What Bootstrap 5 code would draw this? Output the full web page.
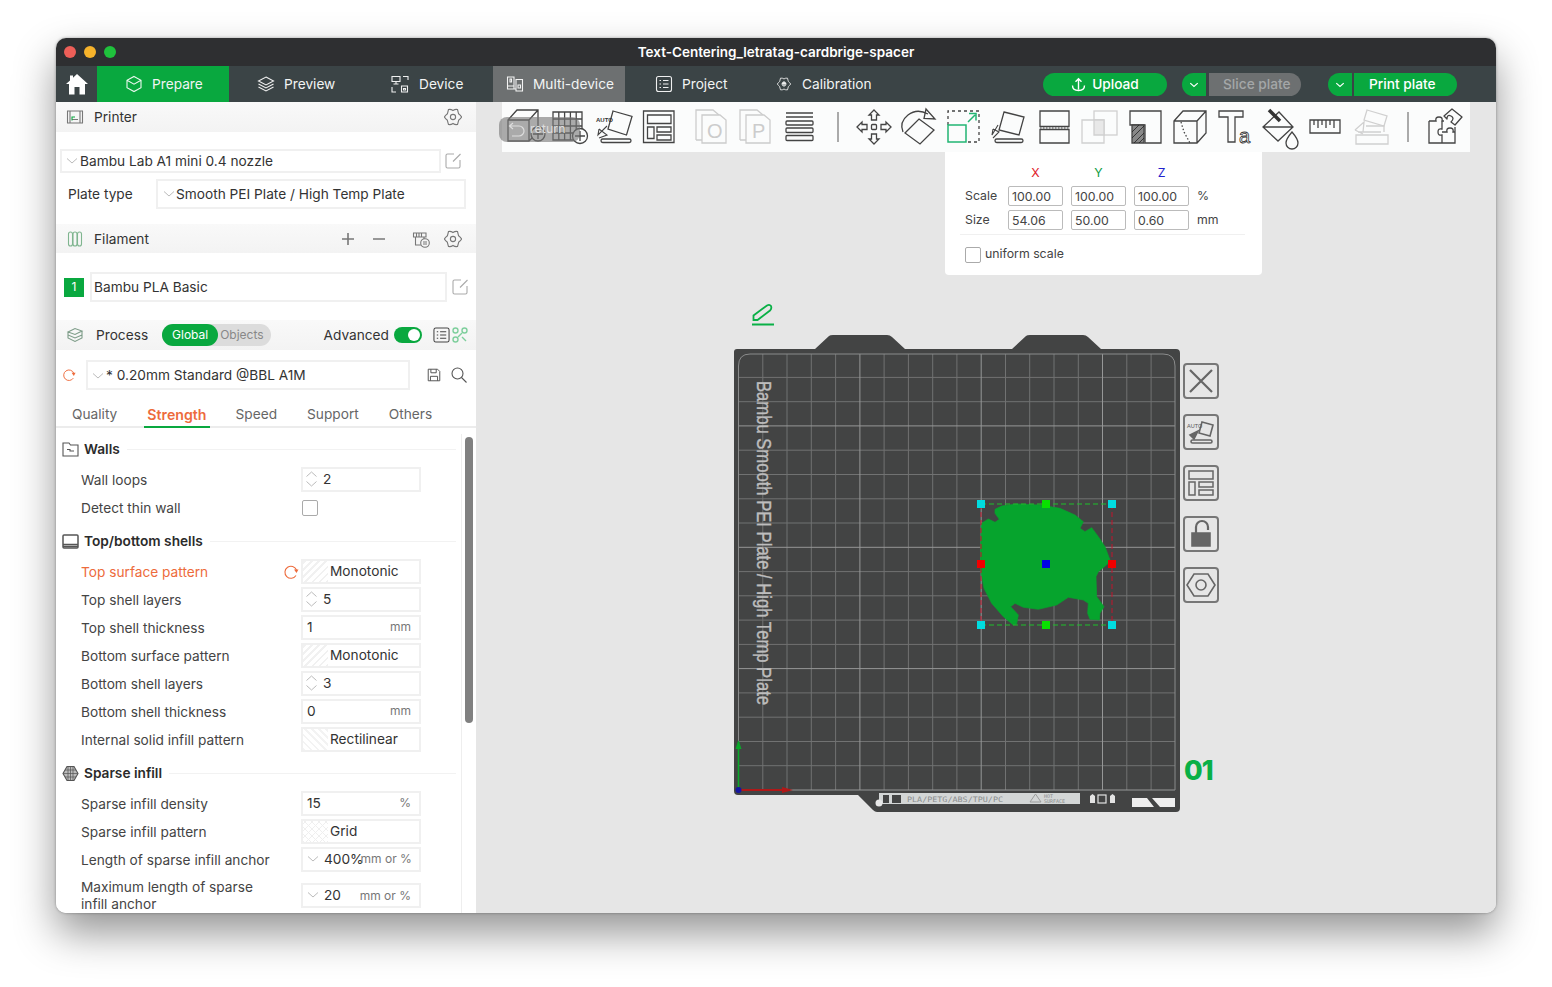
<!DOCTYPE html>
<html lang="en">
<head>
<meta charset="UTF-8">
<title>Bambu Studio</title>
<link href="https://cdn.jsdelivr.net/npm/bootstrap@5.3.0/dist/css/bootstrap.min.css" rel="stylesheet">
<style>
    html, body { height: 987px; overflow: hidden; background: #fff; }
    body { font-family: Inter, "Noto Sans", sans-serif; font-size: 13.7px; color: #333; }
    .app-window { width: 1440px; height: 875px; margin: 38px 0 0 56px; border-radius: 10px; overflow: hidden; box-shadow: 0 20px 42px rgba(0,0,0,.42), 0 0 3px rgba(0,0,0,.35); }
    .title-bar { height: 28px; background: #2e2f31; color: #fff; font-size: 13.5px; font-weight: 600; position: relative; }
    .traffic { width: 12px; height: 12px; border-radius: 50%; }
    .traffic-box { position: absolute; left: 8px; top: 8px; }
    .tab-bar { height: 36px; background: #3b4446; color: #f2f4f4; }
    .home-tab { width: 41px; }
    .tab-item { width: 132px; gap: 9px; padding-left: 28px; height: 36px; }
    .tab-item.is-prepare { background: #09a83f; }
    .tab-item.is-device { padding-left: 30px; gap: 10px; }
    .tab-item.is-grey { background: #6d7071; padding-left: 13px; }
    .tab-item.is-project { padding-left: 30px; }
    .tab-item.is-calib { padding-left: 20px; gap: 11px; }
    .tab-ico { width: 18px; height: 18px; fill: none; stroke: #fff; stroke-width: 1.1; opacity: .92; }
    .tab-item.is-calib .tab-ico { width: 14px; height: 14px; }
    .action-zone { position: absolute; left: 987px; top: 7px; height: 23px; }
    .green-pill { background: #09a83f; color: #fff; height: 23px; font-weight: 500; }
    .upload-pill { width: 124px; border-radius: 12px; gap: 6px; margin-right: 15px; }
    .drop-left { width: 24px; border-radius: 12px 0 0 12px; margin-right: 3px; }
    .slice-pill { width: 92px; border-radius: 0 12px 12px 0; background: #6d7071; color: #a4a7a8; margin-right: 27px; padding-left: 14px; }
    .print-pill { width: 103px; border-radius: 0 12px 12px 0; padding-left: 15px; margin-left: -1px; }
    .work-area { height: 811px; }
    .side-panel { width: 420px; background: #fff; flex: none; }
    .panel-head { height: 30px; background: linear-gradient(#f9f9f9, #f3f3f3); padding-left: 10px; padding-right: 14px; }
    .head-label { margin-left: 10px; }
    .head-ico { width: 18px; height: 18px; fill: none; stroke: #777; stroke-width: 1.1; flex: none; }
    .fld { border: 2px solid #f0f0f0; background: #fff; color: #333; }
    .chev { width: 12px; height: 8px; fill: none; stroke: #bbb; stroke-width: 1; flex: none; }
    .printer-field { margin: 17px 0 0 4px; height: 24px; }
    .printer-select { width: 381px; height: 24px; padding-left: 4px; gap: 2px; }
    .plate-row { margin: 6px 0 0 12px; height: 30px; }
    .plate-label { width: 88px; }
    .plate-select { width: 310px; height: 30px; padding-left: 5px; gap: 1px; }
    .filament-head { height: 29px; margin-top: 15px; padding-top: 1px; }
    .filament-row { margin: 19px 0 0 8px; height: 30px; }
    .swatch { width: 20px; height: 19px; background: #09a83f; color: #fff; font-size: 12px; }
    .filament-input { width: 357px; height: 30px; margin-left: 6px; padding: 1px 0 0 2px; }
    .process-head { margin-top: 18px; padding-right: 8px; }
    .seg-wrap { width: 109px; height: 22px; background: #dcdcdc; border-radius: 11px; margin-left: 14px; font-size: 12px; color: #888; }
    .seg-on { width: 56px; height: 22px; border-radius: 11px; background: #09a83f; color: #fff; margin-right: 2px; }
    .adv-toggle { width: 28px; height: 16px; background: #09a83f; border-radius: 8px; position: relative; margin: 0 11px 0 5px; }
    .adv-toggle::after { content: ""; position: absolute; right: 2px; top: 2px; width: 12px; height: 12px; background: #fff; border-radius: 50%; }
    .preset-row { margin: 10px 0 0 6px; height: 30px; }
    .preset-select { width: 324px; height: 30px; margin-left: 10px; padding: 1px 0 0 4px; gap: 2px; }
    .tabs-row { height: 28px; margin-top: 10px; border-bottom: 2px solid #ececec; color: #666; padding-left: 16px; }
    .tab-text { margin-right: 30px; height: 27px; padding-top: 4px; }
    .tab-text.is-on { color: #ed6b3c; font-weight: 600; font-size: 14.2px; border-bottom: 2px solid #09a83f; padding: 4px 3px 0; margin: 0 26px 0 -3px; height: 28px; }
    .opt-scroll { height: 485px; overflow: hidden; position: relative; padding-top: 2px; }
    .opt-rail { position: absolute; left: 405px; top: 6px; bottom: 0; border-left: 1px solid #eee; }
    .opt-thumb { position: absolute; left: 409px; top: 9px; width: 8px; height: 286px; background: #808080; border-radius: 4px; }
    .opt-title { height: 28px; font-weight: 600; margin: 5px 0 3px 6px; color: #2b2b2b; width: 394px; }
    .opt-rule { flex: 1; border-top: 1px solid #f2f2f2; margin-left: 7px; }
    .opt-ico { width: 17px; height: 17px; margin-right: 5px; flex: none; fill: none; stroke: #555; stroke-width: 1.1; }
    .opt-row { height: 28px; padding-left: 25px; width: 365px; }
    .opt-row.is-tall { height: 36px; margin-top: 4px; line-height: 17px; }
    .opt-label { width: 220px; color: #444; }
    .opt-label.is-mod { color: #ed6b3c; }
    .opt-reset { width: 16px; height: 16px; margin-left: -18px; margin-right: 2px; flex: none; }
    .opt-field { width: 120px; height: 25px; margin-top: -2px; }
    .spin-box { width: 13px; margin: 0 5px 0 2px; flex: none; }
    .spin-box svg { display: block; width: 13px; height: 8px; fill: none; stroke: #bbb; stroke-width: 1; }
    .spin-box svg + svg { margin-top: 2px; }
    .hatch { width: 25px; height: 21px; margin-right: 2px; background: repeating-linear-gradient(45deg, #f3f3f3 0 2px, #fff 2px 5px); flex: none; }
    .hatch.is-mono { background: repeating-linear-gradient(-45deg, #f1f1f1 0 2px, #fff 2px 5px); }
    .hatch.is-cross { background: repeating-linear-gradient(45deg, #efefef 0 1px, transparent 1px 5px), repeating-linear-gradient(-45deg, #efefef 0 1px, #fff 1px 5px); }
    .unit { margin-left: auto; padding-right: 8px; font-size: 12px; color: #777; white-space: nowrap; }
    .unit.is-tight { margin-left: -3px; padding: 0; }
    .check-box { width: 16px; height: 16px; border: 1px solid #aaa; border-radius: 2px; background: #fff; flex: none; }
    .opt-row .check-box { margin: -1px 0 0 1px; }
    .canvas-area { background: #e6e6e6; position: relative; flex: 1; }
    .tool-strip { margin-left: 26px; width: 968px; height: 50px; background: #fbfcfc; position: relative; }
    .tool-cell { width: 45px; height: 50px; flex: none; display: block; fill: none; stroke: #444; stroke-width: 1.3; }
    .tool-sep { height: 30px; border-left: 2px solid #aaa; flex: none; }
    .return-pill { position: absolute; left: -3px; top: 15px; width: 81px; height: 25px; background: rgba(120,120,120,.62); border-radius: 8px; color: #ddd; font-size: 12.5px; padding-left: 31px; }
    .return-pill svg { position: absolute; left: 9px; top: 4px; width: 18px; height: 17px; fill: none; stroke: #ddd; stroke-width: 1.2; }
    .gizmo-panel { position: absolute; left: 469px; top: 50px; width: 317px; height: 123px; background: #fff; border-radius: 0 0 4px 4px; font-size: 12.3px; color: #444; padding: 12px 8px 0 20px; }
    .gizmo-grid { display: grid; grid-template-columns: 35px 55px 55px 55px auto; column-gap: 8px; row-gap: 4px; align-items: center; }
    .gizmo-input { border: 1px solid #bbb; border-radius: 2px; height: 20px; line-height: 19px; padding-left: 3px; }
    .gizmo-rule { border-top: 1px solid #f0f0f0; margin: 4px 0 10px -5px; width: 285px; }
    .plate-svg { position: absolute; left: 0; top: 0; width: 1020px; height: 811px; }
    .side-btns { position: absolute; left: 707px; top: 261px; gap: 15px; }
    .side-btn { width: 36px; height: 36px; border: 2px solid #777; border-radius: 4px; display: block; fill: none; stroke: #666; stroke-width: 1.6; }
</style>
</head>
<body>
<svg width="0" height="0" class="position-absolute">
    <symbol id="gear" viewBox="0 0 18 18"><path d="M9 2.500Q11.200 1 13.500 1.500 14.200 4.400 14.600 5.800 16.200 7 17.600 9 16.200 11 14.600 12.300 14.200 14 13.500 16.500 11.200 17 9 15.500 6.800 17 4.500 16.500 3.800 14 3.400 12.300 1.800 11 .4 9 1.800 7 3.400 5.800 3.800 4.400 4.500 1.500 6.800 1 9 2.500Z"/><circle cx="9" cy="9" r="2.600"/></symbol>
    <symbol id="edit" viewBox="0 0 18 18"><path d="M10 2H3.500A1.500 1.500 0 0 0 2 3.500V14.500A1.500 1.500 0 0 0 3.500 16H14.500A1.500 1.500 0 0 0 16 14.500V8M9 9.500L16.500 2"/></symbol>
    <symbol id="redo" viewBox="0 0 16 16"><path d="M13.500 6A6 6 0 1 0 13 11.500" fill="none" stroke="#ed6b3c" stroke-width="1.100"/><path d="M11 5.500H15.500L13.500 9Z" fill="#ed6b3c"/></symbol>
    <symbol id="chevd" viewBox="0 0 12 8"><path d="M1 1.500L6 6 11 1.500"/></symbol>
</svg>

<div class="app-window d-flex flex-column">
    <!-- title bar -->
    <div class="title-bar d-flex align-items-center justify-content-center">
        <div class="traffic-box d-flex gap-2">
            <span class="traffic" style="background:#ee5f58"></span>
            <span class="traffic" style="background:#f7b32b"></span>
            <span class="traffic" style="background:#1fc23c"></span>
        </div>
        Text-Centering_letratag-cardbrige-spacer
    </div>

    <!-- main tabs -->
    <div class="tab-bar d-flex position-relative">
        <div class="home-tab d-flex align-items-center justify-content-center">
            <svg width="22" height="22" viewBox="0 0 22 22"><path d="M11 1L22 11H19V21.500H13.500V14H8.500V21.500H3V11H0L4 7.400V2.500H7V4.700Z" fill="#fff"/></svg>
        </div>
        <div class="tab-item is-prepare d-flex align-items-center">
            <svg class="tab-ico" viewBox="0 0 18 18"><path d="M9 1.500L16 5.300V12.700L9 16.500 2 12.700V5.300ZM2 5.300L9 9.200 16 5.300"/></svg><span>Prepare</span>
        </div>
        <div class="tab-item d-flex align-items-center">
            <svg class="tab-ico" viewBox="0 0 18 18"><path d="M9 2L16.500 6 9 10 1.500 6ZM1.500 9L9 13 16.500 9M1.500 12L9 16 16.500 12"/></svg><span>Preview</span>
        </div>
        <div class="tab-item is-device d-flex align-items-center">
            <svg class="tab-ico" viewBox="0 0 18 18"><path d="M1 1.500H9V6.500H1ZM5 6.500V9M2.500 9H7.500M12 1.500H17V5M1 12V17H5M10.500 11H16.500V17H10.500ZM12.500 13.500H14.500V15H12.500Z"/></svg><span>Device</span>
        </div>
        <div class="tab-item is-grey d-flex align-items-center">
            <svg class="tab-ico" viewBox="0 0 18 18"><path d="M1.500 2H8V14H1.500ZM4 4H5.500V7H4ZM8 14H10M10 4.500H16.500V16H10ZM12 10H14.500V13H12ZM1.500 11H8"/></svg><span>Multi-device</span>
        </div>
        <div class="tab-item is-project d-flex align-items-center">
            <svg class="tab-ico" viewBox="0 0 18 18"><rect x="1.500" y="1.500" width="15" height="15" rx="2"/><path d="M4.500 5.500H6M8 5.500H13.500M4.500 9H6M8 9H13.500M4.500 12.500H6M8 12.500H13.500"/></svg><span>Project</span>
        </div>
        <div class="tab-item is-calib d-flex align-items-center">
            <svg class="tab-ico" viewBox="0 0 18 18"><use href="#gear"/><path d="M9 6L11.500 9H6.500ZM9 9V12" fill="#fff" stroke="#fff"/></svg><span>Calibration</span>
        </div>
        <div class="action-zone d-flex">
            <div class="green-pill upload-pill d-flex align-items-center justify-content-center">
                <svg width="15" height="15" viewBox="0 0 15 15" fill="none" stroke="#fff" stroke-width="1.400"><path d="M7.500 12.500V2M4.500 4.800L7.500 1.800 10.500 4.800M1.500 8.500C1.500 12 4 13.500 7.500 13.500S13.500 12 13.500 8.500"/></svg>Upload
            </div>
            <div class="green-pill drop-left d-flex align-items-center justify-content-center"><svg width="10" height="6" viewBox="0 0 12 8" fill="none" stroke="#fff" stroke-width="1.600"><use href="#chevd"/></svg></div>
            <div class="green-pill slice-pill d-flex align-items-center">Slice plate</div>
            <div class="green-pill drop-left d-flex align-items-center justify-content-center"><svg width="10" height="6" viewBox="0 0 12 8" fill="none" stroke="#fff" stroke-width="1.600"><use href="#chevd"/></svg></div>
            <div class="green-pill print-pill d-flex align-items-center">Print plate</div>
        </div>
    </div>

    <div class="work-area d-flex">
        <!-- left settings panel -->
        <div class="side-panel">
            <div class="panel-head d-flex align-items-center">
                <svg class="head-ico ms-0" viewBox="0 0 18 18"><path d="M1.500 3H16.500V15H1.500ZM4 3V15M14 3V15M6 11.500H12"/><path d="M6 12.500V9H9" stroke="#09a83f"/></svg>
                <span class="head-label">Printer</span>
                <svg class="head-ico ms-auto"><use href="#gear"/></svg>
            </div>
            <div class="printer-field d-flex align-items-center">
                <div class="fld printer-select d-flex align-items-center"><svg class="chev"><use href="#chevd"/></svg>Bambu Lab A1 mini 0.4 nozzle</div>
                <svg class="head-ico" style="stroke:#aaa;margin-left:3px"><use href="#edit"/></svg>
            </div>
            <div class="plate-row d-flex align-items-center">
                <span class="plate-label">Plate type</span>
                <div class="fld plate-select d-flex align-items-center"><svg class="chev"><use href="#chevd"/></svg>Smooth PEI Plate / High Temp Plate</div>
            </div>
            <div class="panel-head filament-head d-flex align-items-center">
                <svg class="head-ico" viewBox="0 0 18 18" style="stroke:#7fb58f"><rect x="2.500" y="2" width="4" height="14" rx="2"/><rect x="7" y="2" width="4" height="14" rx="2"/><rect x="11.500" y="2" width="4" height="14" rx="2"/></svg>
                <span class="head-label">Filament</span>
                <svg class="head-ico ms-auto" viewBox="0 0 18 18" style="stroke-width:1.600"><path d="M9 3V15M3 9H15"/></svg>
                <svg class="head-ico" style="margin-left:13px;stroke-width:1.600" viewBox="0 0 18 18"><path d="M3 9H15"/></svg>
                <svg class="head-ico" style="margin-left:24px" viewBox="0 0 18 18"><path d="M1.500 3H14V7H1.500ZM3.500 7V15H9M12 7V9M4.500 3V7M7 3V7M9.500 3V7"/><circle cx="13" cy="13" r="4.300"/><path d="M11 12H15M11 14H15"/></svg>
                <svg class="head-ico" style="margin-left:14px"><use href="#gear"/></svg>
            </div>
            <div class="filament-row d-flex align-items-center">
                <div class="swatch d-flex align-items-center justify-content-center">1</div>
                <div class="fld filament-input d-flex align-items-center">Bambu PLA Basic</div>
                <svg class="head-ico ms-1" style="stroke:#aaa"><use href="#edit"/></svg>
            </div>
            <div class="panel-head process-head d-flex align-items-center">
                <svg class="head-ico" viewBox="0 0 18 18"><path d="M2 6L9 2.500 16 5 9 8.500ZM2 6V9L9 12 16 9M2 9V12L9 15.500 16 12V5" stroke="#7d9c88"/></svg>
                <span class="head-label" style="margin-left:12px">Process</span>
                <div class="seg-wrap d-flex align-items-center"><span class="seg-on d-flex align-items-center justify-content-center">Global</span>Objects</div>
                <span class="ms-auto">Advanced</span>
                <span class="adv-toggle"></span>
                <svg class="head-ico" viewBox="0 0 18 18" style="stroke:#444;width:17px"><rect x="1" y="1.500" width="16" height="15" rx="2"/><path d="M4 5.500H5.500M7.500 5.500H14M4 9H5.500M7.500 9H14M4 12.500H5.500M7.500 12.500H14"/></svg>
                <svg class="head-ico" viewBox="0 0 18 18" style="margin:0 -1px 0 1px;stroke:#7fcf9d;stroke-width:1.400"><circle cx="4.500" cy="4.500" r="2.500"/><circle cx="13.500" cy="4.500" r="2.500"/><circle cx="4.500" cy="13.500" r="2.500"/><path d="M7 11L11 7M11 11L15 15"/></svg>
            </div>
            <div class="preset-row d-flex align-items-center">
                <svg width="14" height="14"><use href="#redo"/></svg>
                <div class="fld preset-select d-flex align-items-center"><svg class="chev"><use href="#chevd"/></svg>* 0.20mm Standard @BBL A1M</div>
                <svg class="head-ico" style="margin-left:16px;width:16px;stroke:#555" viewBox="0 0 18 18"><path d="M2.500 2.500H13L15.500 5V15.500H2.500ZM5.500 2.500V6.500H11.500V2.500M5 15.500V10.500H13V15.500"/></svg>
                <svg class="head-ico" style="margin-left:8px;stroke:#555" viewBox="0 0 18 18"><circle cx="7.500" cy="7.500" r="5.500"/><path d="M11.500 11.500L16.500 16.500"/></svg>
            </div>
            <div class="tabs-row d-flex">
                <span class="tab-text">Quality</span>
                <span class="tab-text is-on">Strength</span>
                <span class="tab-text">Speed</span>
                <span class="tab-text">Support</span>
                <span class="tab-text">Others</span>
            </div>

            <div class="opt-scroll">
                <div class="opt-rail"></div>
                <div class="opt-thumb"></div>

                <div class="opt-title d-flex align-items-center">
                    <svg class="opt-ico" viewBox="0 0 17 17"><path d="M1 2H7L8.500 4H16V15H1ZM5 8.500H8V10H12"/></svg>Walls<span class="opt-rule"></span>
                </div>
                <div class="opt-row d-flex align-items-center"><span class="opt-label">Wall loops</span><div class="fld opt-field d-flex align-items-center"><div class="spin-box"><svg viewBox="0 0 12 8"><path d="M1 6.500L6 2 11 6.500"/></svg><svg viewBox="0 0 12 8"><use href="#chevd"/></svg></div>2</div></div>
                <div class="opt-row d-flex align-items-center"><span class="opt-label">Detect thin wall</span><div class="check-box"></div></div>

                <div class="opt-title d-flex align-items-center">
                    <svg class="opt-ico" viewBox="0 0 17 17" style="stroke-width:1.500"><rect x="1" y="2" width="15" height="13" rx="1"/><path d="M1 11.500H16M1 13.500H16"/></svg>Top/bottom shells<span class="opt-rule"></span>
                </div>
                <div class="opt-row d-flex align-items-center"><span class="opt-label is-mod">Top surface pattern</span><svg class="opt-reset"><use href="#redo"/></svg><div class="fld opt-field d-flex align-items-center"><span class="hatch is-mono"></span>Monotonic</div></div>
                <div class="opt-row d-flex align-items-center"><span class="opt-label">Top shell layers</span><div class="fld opt-field d-flex align-items-center"><div class="spin-box"><svg viewBox="0 0 12 8"><path d="M1 6.500L6 2 11 6.500"/></svg><svg viewBox="0 0 12 8"><use href="#chevd"/></svg></div>5</div></div>
                <div class="opt-row d-flex align-items-center"><span class="opt-label">Top shell thickness</span><div class="fld opt-field d-flex align-items-center ps-1"><span>1</span><span class="unit">mm</span></div></div>
                <div class="opt-row d-flex align-items-center"><span class="opt-label">Bottom surface pattern</span><div class="fld opt-field d-flex align-items-center"><span class="hatch is-mono"></span>Monotonic</div></div>
                <div class="opt-row d-flex align-items-center"><span class="opt-label">Bottom shell layers</span><div class="fld opt-field d-flex align-items-center"><div class="spin-box"><svg viewBox="0 0 12 8"><path d="M1 6.500L6 2 11 6.500"/></svg><svg viewBox="0 0 12 8"><use href="#chevd"/></svg></div>3</div></div>
                <div class="opt-row d-flex align-items-center"><span class="opt-label">Bottom shell thickness</span><div class="fld opt-field d-flex align-items-center ps-1"><span>0</span><span class="unit">mm</span></div></div>
                <div class="opt-row d-flex align-items-center"><span class="opt-label">Internal solid infill pattern</span><div class="fld opt-field d-flex align-items-center"><span class="hatch"></span>Rectilinear</div></div>

                <div class="opt-title d-flex align-items-center">
                    <svg class="opt-ico" viewBox="0 0 17 17" style="fill:#bbb"><path d="M5 1.500H12L16 8.500 12 15.500H5L1 8.500Z"/><path d="M1 8.500H16M3 5H14M3 12H14M6 1.500V15.500M8.500 1.500V15.500M11 1.500V15.500" stroke-width=".7"/></svg>Sparse infill<span class="opt-rule"></span>
                </div>
                <div class="opt-row d-flex align-items-center"><span class="opt-label">Sparse infill density</span><div class="fld opt-field d-flex align-items-center ps-1"><span>15</span><span class="unit">%</span></div></div>
                <div class="opt-row d-flex align-items-center"><span class="opt-label">Sparse infill pattern</span><div class="fld opt-field d-flex align-items-center"><span class="hatch is-cross"></span>Grid</div></div>
                <div class="opt-row d-flex align-items-center"><span class="opt-label">Length of sparse infill anchor</span><div class="fld opt-field d-flex align-items-center ps-1"><svg class="chev" style="margin-right:5px"><use href="#chevd"/></svg>400%<span class="unit is-tight">mm or %</span></div></div>
                <div class="opt-row is-tall d-flex align-items-center"><span class="opt-label">Maximum length of sparse<br>infill anchor</span><div class="fld opt-field d-flex align-items-center ps-1"><svg class="chev" style="margin-right:5px"><use href="#chevd"/></svg>20<span class="unit">mm or %</span></div></div>
            </div>
        </div>

        <!-- 3D view -->
        <div class="canvas-area">
            <svg class="plate-svg" viewBox="476 102 1020 811">
                <path d="M737 349H815L829 336Q830 335 833 335H887Q890 335 892 337L905 349H1012L1026 336Q1027 335 1030 335H1083Q1086 335 1088 337L1101 349H1176Q1180 349 1180 353V808Q1180 812 1176 812H877Q875 812 873 810L858 795H738Q734 795 734 791V352Q734 349 737 349Z" fill="#434444"/>
                <path id="gridMinor" fill="none" stroke="#717272" stroke-width="1"/>
                <path id="gridMajor" fill="none" stroke="#969797" stroke-width="1"/>
                <path d="M738.500 790V366Q738.500 354 750 354H1163Q1175 354 1175 366V790" fill="none" stroke="#8a8b8b" stroke-width="1"/>
                <text transform="translate(757 381) rotate(90)" font-family="'Liberation Sans', sans-serif" font-size="21" fill="#bdbdbd" stroke="#bdbdbd" stroke-width=".4" textLength="324" lengthAdjust="spacingAndGlyphs">Bambu Smooth PEI Plate / High Temp Plate</text>

                <!-- label strip at the front edge -->
                <rect x="879" y="793" width="201" height="11" fill="#d3d6d6"/>
                <circle cx="879" cy="803" r="3.500" fill="#e8e8e8"/>
                <path d="M883 795H889V803H883ZM892 795H901V803H892Z" fill="#434444"/>
                <text x="907" y="802" font-family="'DejaVu Sans Mono', monospace" font-size="7.500" fill="#8a8d8d" textLength="96" lengthAdjust="spacingAndGlyphs">PLA/PETG/ABS/TPU/PC</text>
                <path d="M1030 802H1041L1035.500 794Z" fill="none" stroke="#9a9c9c"/>
                <text x="1044" y="798" font-family="'DejaVu Sans Mono', monospace" font-size="5" fill="#8a8d8d">HOT</text>
                <text x="1044" y="803" font-family="'DejaVu Sans Mono', monospace" font-size="5" fill="#8a8d8d">SURFACE</text>
                <path d="M1090 796L1092.500 794 1095 796V803H1090ZM1110 796L1112.500 794 1115 796V803H1110Z" fill="#e3e3e3"/>
                <rect x="1098" y="795" width="8" height="8" fill="none" stroke="#e3e3e3" stroke-width="1.200"/>
                <path d="M1132 798H1147L1154 807H1132ZM1152 798H1175V807H1160Z" fill="#eee"/>

                <!-- axes -->
                <path d="M738.500 790V742" stroke="#0aa82a" stroke-width="1.600"/>
                <path d="M735.500 749L738.500 740 741.500 749Z" fill="#0aa82a"/>
                <path d="M738.500 790H790" stroke="#b01818" stroke-width="2"/>
                <path d="M782 787L793 790 782 793Z" fill="#b01818"/>
                <circle cx="738.500" cy="790" r="3" fill="#1616a0"/>

                <!-- model -->
                <g transform="translate(960 350) scale(.3333)">
                    <path d="M105 478L125 468 170 462 240 465 300 475 345 495 370 515 360 535 375 545 395 533 415 560 435 590 450 630 445 640 415 665 408 680 410 740 432 770 420 790 418 810 390 808 383 790 385 760 370 750 325 742 290 765 235 778 190 772 165 760 152 770 175 795 170 822 160 825 130 800 95 760 72 715 62 660 62 590 65 520 85 507 105 517 118 508 105 490Z" fill="#06a42d" stroke="#06a42d" stroke-width="2" stroke-linejoin="round"/>
                </g>
                <path d="M981 504H1112M981 625H1112" stroke="#1fc02b" stroke-dasharray="5 3"/>
                <path d="M981 504V625M1112 504V625" stroke="#c2152c" stroke-dasharray="5 3"/>
                <g id="handles"></g>

                <!-- "01" plate number and pencil -->
                <text x="1184" y="780" font-family="Inter, sans-serif" font-weight="800" font-size="27" fill="#09b046" letter-spacing="-1">01</text>
                <path d="M753.500 320V315.500L767 305.500Q769.500 304 771 306 772 308.500 770 310.500L757.500 320Z" fill="none" stroke="#09b046" stroke-width="1.800"/>
                <path d="M752 324.500H774" stroke="#09b046" stroke-width="2"/>
            </svg>

            <!-- top toolbar -->
            <div class="tool-strip d-flex align-items-center">
                <svg class="tool-cell" viewBox="0 0 45 50"><path d="M6 18L15 8H36V30L27 39H6ZM6 18H27V39M27 18L36 8"/><circle cx="36" cy="32" r="7" fill="#fbfcfc"/><path d="M36 27V37M31 32H41"/></svg>
                <svg class="tool-cell" viewBox="0 0 45 50"><path d="M6 10H35V38H6ZM6 17H35M6 24H35M6 31H35M11.800 10V38M17.600 10V38M23.400 10V38M29.200 10V38"/><circle cx="33" cy="34" r="7.500" fill="#fbfcfc"/><path d="M33 29V39M28 34H38"/></svg>
                <svg class="tool-cell" viewBox="0 0 45 50"><path d="M21 9L40 14.500 34.500 33 16 27Z"/><path d="M15 24L6 33 7 27M7 36L15 33 7 27" stroke-width="1.100"/><rect x="9" y="37" width="30" height="3.500" rx="1.700"/><text x="4" y="20" font-size="6" font-family="'Liberation Sans', sans-serif" font-weight="700" fill="#333" stroke="none">AUTO</text></svg>
                <svg class="tool-cell" viewBox="0 0 45 50"><path d="M6.500 9H37V40.500H6.500ZM10.500 13H34V21.500H10.500ZM10.500 25V36.500H17V25ZM20 25H34V30H20ZM20 33H34V38H20Z"/></svg>
                <span style="width:8px" class="flex-none"></span>
                <svg class="tool-cell" viewBox="0 0 45 50" style="stroke:#ccc"><path d="M6 38V8H23L29 13M6 38H12"/><path d="M12 13H30L36 18V41H12Z" fill="#fbfcfc"/><text x="17" y="36" font-size="20" font-family="'Liberation Sans', sans-serif" fill="#ccc" stroke="none">O</text></svg>
                <svg class="tool-cell" viewBox="0 0 45 50" style="stroke:#ccc"><path d="M5 38V8H22L28 13M5 38H11"/><path d="M11 13H29L35 18V41H11Z" fill="#fbfcfc"/><text x="17" y="36" font-size="20" font-family="'Liberation Sans', sans-serif" fill="#ccc" stroke="none">P</text></svg>
                <svg class="tool-cell" viewBox="0 0 45 50"><path d="M6 11H33M6 15H33"/><rect x="6" y="19" width="27" height="4" rx="1"/><rect x="6" y="26" width="27" height="4.500" rx="1"/><rect x="6" y="33.500" width="27" height="5" rx="1"/></svg>
                <span class="d-flex justify-content-center flex-none" style="width:26px"><span class="tool-sep"></span></span>
                <svg class="tool-cell" viewBox="0 0 45 50"><rect x="20.500" y="22.500" width="5" height="5" rx="1"/><path d="M23 8L28 13H25.500V18H20.500V13H18ZM23 42L28 37H25.500V32H20.500V37H18ZM6 25L11 20V22.500H16V27.500H11V30ZM40 25L35 20V22.500H30V27.500H35V30Z"/></svg>
                <svg class="tool-cell" viewBox="0 0 45 50"><path d="M23 17L38 28 24 42 9 31Z"/><path d="M7 30Q3 20 12 13T32 12"/><path d="M30 7L39 17 28 16.500Z"/></svg>
                <svg class="tool-cell" viewBox="0 0 45 50"><path d="M7 23V9H38V40H25" stroke-dasharray="3 3"/><path d="M7 23H25V40H7Z" stroke="#22b573" stroke-width="1.500"/><path d="M27 20L34 13M28 11.500H35V18.500" stroke="#22b573" stroke-width="1.500"/></svg>
                <svg class="tool-cell" viewBox="0 0 45 50"><path d="M18 10L38 15 33 33 13 28Z"/><path d="M12 23L6 33 7 27M7 36L13 30 7 27" stroke-width="1.100"/><rect x="9" y="37" width="28" height="3.500" rx="1.700"/></svg>
                <svg class="tool-cell" viewBox="0 0 45 50"><path d="M9 9H38V24.500H9ZM9 27.500H38V41H9Z"/><path d="M9 26H38" stroke-dasharray="1.500 1.500" stroke-width="1"/></svg>
                <svg class="tool-cell" viewBox="0 0 45 50" style="stroke:#d0d0d0"><rect x="18" y="9" width="23" height="24"/><path d="M6 18H28V41H6Z" fill="#fbfcfc"/><path d="M18 18H28V33H18Z" fill="#e8e8e8"/></svg>
                <svg class="tool-cell" viewBox="0 0 45 50"><path d="M9 9H40V41H24V23H9Z"/><path d="M11 23H23V41H11Z" fill="#888"/><path d="M11 30L18 23M11 36L23 24M13 41L23 31M18 41L23 36" stroke="#222" stroke-width=".8"/></svg>
                <svg class="tool-cell" viewBox="0 0 45 50"><path d="M8 19L17 9H40V31L31 41H8ZM8 19H31V41M31 19L40 9"/><path d="M15 20L18 30 24 41" stroke-dasharray="1.500 2"/></svg>
                <svg class="tool-cell" viewBox="0 0 45 50"><path d="M8 9H32V15H24V40H17V15H8Z"/><text x="28" y="41" font-size="20" font-family="'Liberation Sans', sans-serif" fill="#fbfcfc" stroke="#333" stroke-width=".8">a</text></svg>
                <svg class="tool-cell" viewBox="0 0 45 50"><path d="M7 25L23 10 37 25 22 39ZM7 25H37"/><path d="M13 8L24 19" stroke-width="3.500" stroke="#333"/><path d="M36 30Q30 37 30 41A6 6 0 0 0 42 41Q42 37 36 30Z" fill="#fbfcfc"/></svg>
                <svg class="tool-cell" viewBox="0 0 45 50"><path d="M9 18H39V31H9ZM13 18V23M17 18V26M21 18V23M25 18V26M29 18V23M33 18V26"/></svg>
                <svg class="tool-cell" viewBox="0 0 45 50" style="stroke:#d0d0d0"><path d="M21 8L41 14 38 24 18 18ZM9 28L18 20 17 30M9 28L17 32M12 30H35"/><path d="M20 24H38V30M10 33H42V42H10Z"/></svg>
                <span class="d-flex justify-content-center flex-none" style="width:34px"><span class="tool-sep"></span></span>
                <svg class="tool-cell" viewBox="0 0 45 50"><path d="M4 19H11Q10 15 14 15 18 15 17 19H19M4 19V41H30V25M17 19V27Q13 26 13 30 13 34 17 33V41M17 30H22Q21 26 25 26 29 26 28 30H30"/><path d="M19 14L27 7 37 15 30 23 26 20Q30 16 26 14 22 12 22 17Z" stroke-linejoin="round"/></svg>
                <div class="return-pill d-flex align-items-center">
                    <svg viewBox="0 0 18 17"><path d="M5 2L1.500 5 5 8M2 5H11A5 5 0 0 1 11 15H4"/></svg>return
                </div>
            </div>

            <!-- scale panel -->
            <div class="gizmo-panel">
                <div class="gizmo-grid">
                    <span></span><span class="text-center" style="color:#e0202a">X</span><span class="text-center" style="color:#0a9a40">Y</span><span class="text-center" style="color:#2222cc">Z</span><span></span>
                    <span>Scale</span><span class="gizmo-input">100.00</span><span class="gizmo-input">100.00</span><span class="gizmo-input">100.00</span><span>%</span>
                    <span>Size</span><span class="gizmo-input">54.06</span><span class="gizmo-input">50.00</span><span class="gizmo-input">0.60</span><span>mm</span>
                </div>
                <div class="gizmo-rule"></div>
                <div class="d-flex align-items-center gap-1"><span class="check-box"></span>uniform scale</div>
            </div>

            <!-- buttons beside the plate -->
            <div class="side-btns d-flex flex-column">
                <svg class="side-btn" viewBox="0 0 32 32"><path d="M5 5L27 27M27 5L5 27" stroke-width="2.200"/></svg>
                <svg class="side-btn" viewBox="0 0 32 32"><path d="M17 6L28 9 25 20 14 17Z"/><path d="M5 19L13 15 9 23Z" fill="#666"/><rect x="6" y="24" width="21" height="3" rx="1.500"/><text x="2" y="12" font-size="5.500" font-family="'Liberation Sans', sans-serif" fill="#555" stroke="none">AUTO</text></svg>
                <svg class="side-btn" viewBox="0 0 32 32"><path d="M4 4H28V12H4ZM4 15V28H10V15ZM14 15H28V20H14ZM14 23H28V28H14Z" stroke-width="1.500"/></svg>
                <svg class="side-btn" viewBox="0 0 32 32"><path d="M7 15H25V28H7Z" fill="#666"/><path d="M11 15V9A6 6 0 0 1 23 9V12" stroke-width="2.200"/></svg>
                <svg class="side-btn" viewBox="0 0 32 32"><path d="M9 5H23L30 16 23 27H9L2 16Z"/><circle cx="16" cy="16" r="5"/></svg>
            </div>
        </div>
    </div>
</div>

<script>
    // plate grid: every 5th line is brighter
    var step = 24.27, minor = '', major = '';
    for (var i = 1; i < 18; i++) {
        var x = 738.5 + i * step, y = 790 - i * step;
        var lines = 'M' + x.toFixed(1) + ' 354V790M738.5 ' + y.toFixed(1) + 'H1175';
        if (i % 5 == 0) { major += lines; } else { minor += lines; }
    }
    major += 'M738.5 790H1175';
    document.getElementById('gridMinor').setAttribute('d', minor);
    document.getElementById('gridMajor').setAttribute('d', major);

    // gizmo handles on the bounding box
    var handles = [
        [981, 504, '#00dce0'], [1112, 504, '#00dce0'], [981, 625, '#00dce0'], [1112, 625, '#00dce0'],
        [1046, 504, '#08e000'], [1046, 625, '#08e000'], [981, 564, '#f00000'], [1112, 564, '#f00000'], [1046, 564, '#0000e6']
    ];
    var g = document.getElementById('handles');
    handles.forEach(function (p) {
        var r = document.createElementNS('http://www.w3.org/2000/svg', 'rect');
        r.setAttribute('x', p[0] - 4); r.setAttribute('y', p[1] - 4);
        r.setAttribute('width', 8); r.setAttribute('height', 8);
        r.setAttribute('fill', p[2]);
        g.appendChild(r);
    });
</script>
<script src="https://cdn.jsdelivr.net/npm/bootstrap@5.3.0/dist/js/bootstrap.bundle.min.js"></script>
</body>
</html>
